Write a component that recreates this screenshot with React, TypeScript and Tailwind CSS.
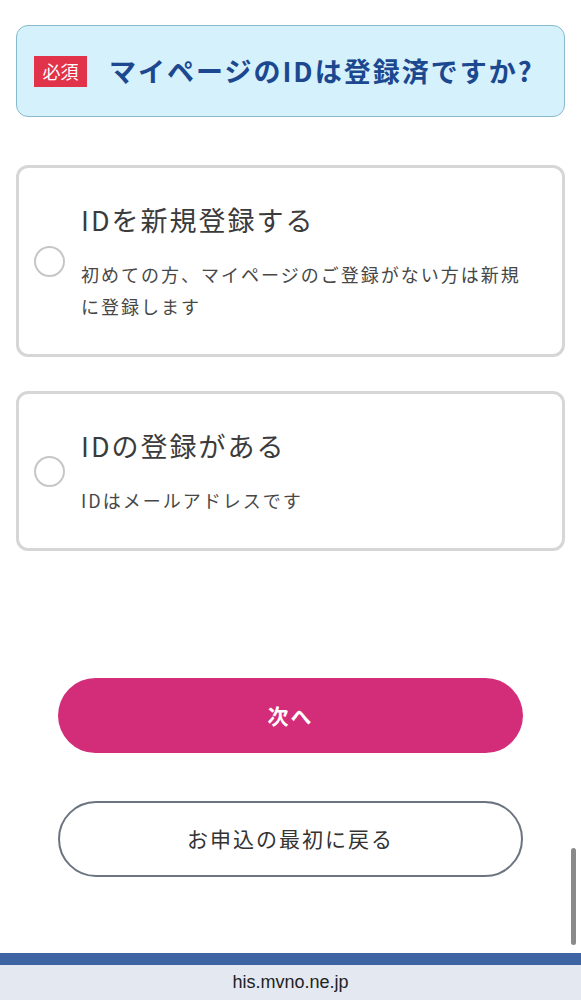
import React from "react";

const jp = { fontFamily: '"Noto Sans CJK JP", "Noto Sans", sans-serif' };

function Option({ title, desc }: { title: string; desc: string }) {
  return (
    <label className="flex items-center rounded-[12px] border-[3px] border-[#d6d6d6] bg-white pl-[15px] pr-[24px] py-[32px]">
      <span className="shrink-0 w-[31px] h-[31px] rounded-full border-2 border-[#c6c6c6] bg-white" />
      <div className="ml-[16px] flex flex-col gap-[18px]">
        <div className="text-[27px] leading-[40px] tracking-[2px] text-[#3b3b3b]">{title}</div>
        <div className="text-[18px] leading-[32px] tracking-[2px] text-[#474747]">{desc}</div>
      </div>
    </label>
  );
}

export default function App() {
  return (
    <div className="relative h-[1000px] flex flex-col bg-white overflow-hidden" style={jp}>
      <div className="px-[16px] pt-[25px]">
        {/* question header */}
        <div className="h-[92px] flex items-center rounded-[12px] border-[1.5px] border-[#89b9cd] bg-[#d5f1fb] pl-[17px]">
          <span className="w-[53px] h-[31px] flex items-center justify-center bg-[#e1334a] text-white text-[18px] leading-none">
            必須
          </span>
          <h1 className="ml-[22px] text-[27px] font-bold tracking-[2px] text-[#1c4890]">
            マイページのIDは登録済ですか?
          </h1>
        </div>

        <div className="mt-[48px] flex flex-col gap-[34px]">
          <Option title="IDを新規登録する" desc="初めての方、マイページのご登録がない方は新規に登録します" />
          <Option title="IDの登録がある" desc="IDはメールアドレスです" />
        </div>
      </div>

      {/* buttons */}
      <div className="mt-[127px] px-[58px] flex flex-col gap-[48px]">
        <button className="h-[75px] rounded-full bg-[#d32c79] text-white text-[21px] font-bold tracking-[2px]">
          次へ
        </button>
        <button className="h-[76px] rounded-full border-2 border-[#6b7480] bg-white text-[#333] text-[21px] tracking-[2px]">
          お申込の最初に戻る
        </button>
      </div>

      {/* browser address bar */}
      <div className="mt-auto">
        <div className="h-[12px] bg-[#3f64a4]" />
        <div className="h-[35px] bg-[#e3e8f1] flex items-center justify-center text-[18px] text-[#222]" style={{ fontFamily: '"Liberation Sans", Arial, sans-serif' }}>
          his.mvno.ne.jp
        </div>
      </div>

      {/* scroll indicator */}
      <div className="absolute right-[5px] top-[848px] w-[5px] h-[97px] rounded-full bg-[#8a8a8a]" />
    </div>
  );
}
